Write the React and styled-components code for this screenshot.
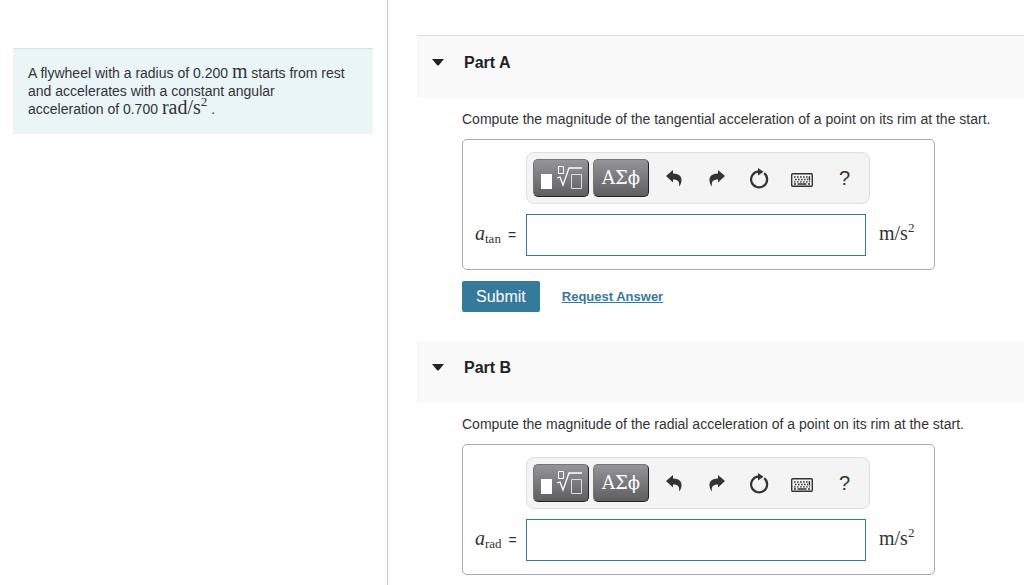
import React from 'react';
import styled, { createGlobalStyle } from 'styled-components';

const GlobalStyle = createGlobalStyle`
  * {
    box-sizing: border-box;
  }

  body {
    margin: 0;
    background: #fff;
    color: #333;
    font-family: "Liberation Sans", Arial, sans-serif;
    font-size: 14px;
    line-height: 18px;
    overflow-x: hidden;
  }
`;

const Page = styled.div`
  display: flex;
  min-height: 100vh;
`;

const Sidebar = styled.aside`
  flex: 0 0 388px;
  padding: 48px 14px 0 13px;
  border-right: 1px solid #c3c8d4;
`;

const Problem = styled.p`
  margin: 0;
  padding: 15px 24px 16px 15px;
  border-top: 1px solid #dcdfe0;
  background: #eaf5f8;
`;

const Main = styled.main`
  flex: 1;
  min-width: 0;
  padding: 35px 0 0 29px;
`;

const Part = styled.section`
  & + & {
    margin-top: 29px;
  }
`;

const PartHeader = styled.header`
  display: flex;
  align-items: center;
  padding: 17px 15px 25px;
  border-top: ${props => props.$ruled ? '1px solid #dcdcdc' : '0'};
  background: #f9f9f9;
`;

const Toggle = styled.button`
  display: flex;
  width: 32px;
  padding: 0 0 3px;
  border: 0;
  background: none;
  color: #222;
`;

const PartTitle = styled.h2`
  margin: 0;
  color: #222;
  font-size: 16px;
  font-weight: bold;
  line-height: 20px;
`;

const PartBody = styled.div`
  padding: 12px 0 0 45px;
`;

const Question = styled.p`
  margin: 0 0 11px;
`;

const AnswerBox = styled.div`
  display: grid;
  grid-template-columns: 51px 340px 1fr;
  row-gap: 10px;
  align-items: center;
  max-width: 473px;
  padding: 12px 12px 13px;
  border: 1px solid #aaa;
  border-radius: 5px;
`;

const Toolbar = styled.div`
  grid-column: 2 / 4;
  display: flex;
  align-items: center;
  width: 344px;
  height: 52px;
  padding: 0 3px 0 6px;
  border: 1px solid #dedede;
  border-radius: 8px;
  background: #f4f4f4;
`;

const PaletteButton = styled.button`
  display: flex;
  align-items: center;
  justify-content: center;
  width: 56px;
  height: 38px;
  margin-right: 4px;
  padding: 0 0 2px;
  border: 1px solid;
  border-color: #777 #222 #222 #777;
  border-radius: 5px;
  background: linear-gradient(#95949a, #5f5f60);
  color: #fff;
  font-family: "DejaVu Serif", serif;
  font-size: 18px;
`;

const ToolButton = styled.button`
  flex: 1;
  display: flex;
  align-items: center;
  justify-content: center;
  height: 38px;
  padding: 0;
  border: 0;
  background: none;
  color: #333;
  font-family: inherit;
  font-size: 20px;
`;

const Label = styled.label`
  display: flex;
  align-items: baseline;
  gap: 7px;
  white-space: nowrap;
`;

const Field = styled.input`
  width: 340px;
  height: 42px;
  padding: 0 8px;
  border: 1px solid #35799c;
  background: #fff;
  font-size: 18px;
  outline: 0;
`;

const Unit = styled.span`
  padding-left: 13px;
`;

const MathText = styled.span`
  font-family: "Liberation Serif", "Times New Roman", serif;
  font-size: 20px;
  line-height: 14px;
  white-space: nowrap;

  sup, sub {
    font-size: 13px;
    line-height: 0;
  }

  sub {
    vertical-align: -3px;
  }
`;

const Actions = styled.div`
  display: flex;
  align-items: center;
  gap: 22px;
  margin-top: 11px;
`;

const Submit = styled.button`
  height: 31px;
  padding: 0 14px;
  border: 0;
  border-radius: 2px;
  background: #367a9b;
  color: #fff;
  font-family: inherit;
  font-size: 16px;
`;

const RequestLink = styled.a`
  color: #367a9b;
  font-size: 13px;
  font-weight: bold;
`;

const CaretIcon = () => (
  <svg width="12" height="8" viewBox="0 0 12 8" fill="currentColor" aria-hidden="true">
    <path d="M0 1h12L7 7q-1 1-2 0z" />
  </svg>
);

const RootIcon = () => (
  <svg width="44" height="28" viewBox="0 0 44 28" fill="none" stroke="#fff" aria-hidden="true">
    <path d="M2 11h11v15H2z" fill="#fff" stroke="none" />
    <path d="M19.500 3.500h5v7h-5z" />
    <path d="M18 15l3-1 3 8 6-17h13" strokeWidth="1.300" />
    <path d="M32.500 11.500h10v14h-10z" stroke="#ddd" />
  </svg>
);

const ArrowIcon = ({ flip }) => (
  <svg width="16" height="17" viewBox="0 0 16 17" fill="currentColor" aria-hidden="true">
    <path transform={flip ? 'translate(16 0) scale(-1 1)' : undefined} d="M0 6L7 0v3.500c6 .2 8.800 3 8.500 7-.1 2-.9 4.500-2.500 6 .8-4.500-.7-7-6-7V12.500z" />
  </svg>
);

const ResetIcon = () => (
  <svg width="20" height="21" viewBox="0 0 20 21" aria-hidden="true">
    <path d="M15.200 5.200A8 8 0 1 1 9.500 3.400" fill="none" stroke="currentColor" strokeWidth="2.200" />
    <path d="M9 0l5.500 3.800L9 7.500z" fill="currentColor" />
  </svg>
);

const KeyboardIcon = () => (
  <svg width="22" height="18" viewBox="0 -4 22 18" fill="none" stroke="currentColor" aria-hidden="true">
    <rect x=".7" y=".7" width="20.600" height="12.600" rx="1" strokeWidth="1.400" />
    <path d="M3 4h16M4 6.500h13" strokeWidth="1.600" strokeDasharray="1.600 1.400" />
    <path d="M3 8.800h16" strokeWidth="1.200" strokeDasharray="1.600 1.400" />
    <path d="M3 11h2M6.500 11h9M17 11h2M18.400 3.500v4" strokeWidth="1.500" />
  </svg>
);

const parts = [
  {
    id: 'tan',
    title: 'Part A',
    question: 'Compute the magnitude of the tangential acceleration of a point on its rim at the start.',
    active: true
  },
  {
    id: 'rad',
    title: 'Part B',
    question: 'Compute the magnitude of the radial acceleration of a point on its rim at the start.',
    active: false
  }
];

const AnswerPart = ({ id, title, question, active }) => (
  <Part>
    <PartHeader $ruled={active}>
      <Toggle type="button" aria-label={`Collapse ${title}`}><CaretIcon /></Toggle>
      <PartTitle>{title}</PartTitle>
    </PartHeader>
    <PartBody>
      <Question>{question}</Question>
      <AnswerBox>
        <Toolbar>
          <PaletteButton type="button" aria-label="Templates"><RootIcon /></PaletteButton>
          <PaletteButton type="button">ΑΣϕ</PaletteButton>
          <ToolButton type="button" aria-label="Undo"><ArrowIcon /></ToolButton>
          <ToolButton type="button" aria-label="Redo"><ArrowIcon flip /></ToolButton>
          <ToolButton type="button" aria-label="Reset"><ResetIcon /></ToolButton>
          <ToolButton type="button" aria-label="Keyboard shortcuts"><KeyboardIcon /></ToolButton>
          <ToolButton type="button">?</ToolButton>
        </Toolbar>
        <Label htmlFor={id}>
          <MathText><i>a</i><sub>{id}</sub></MathText>
          <span>=</span>
        </Label>
        <Field id={id} type="text" />
        <Unit><MathText>m/s<sup>2</sup></MathText></Unit>
      </AnswerBox>
      {active && (
        <Actions>
          <Submit type="button">Submit</Submit>
          <RequestLink href="#request">Request Answer</RequestLink>
        </Actions>
      )}
    </PartBody>
  </Part>
);

export default function App() {
  return (
    <>
      <GlobalStyle />
      <Page>
        <Sidebar>
          <Problem>
            A flywheel with a radius of 0.200 <MathText>m</MathText> starts from rest and accelerates with a constant angular acceleration of 0.700 <MathText>rad/s<sup>2</sup></MathText> .
          </Problem>
        </Sidebar>
        <Main>
          {parts.map(part => <AnswerPart key={part.id} {...part} />)}
        </Main>
      </Page>
    </>
  );
}
